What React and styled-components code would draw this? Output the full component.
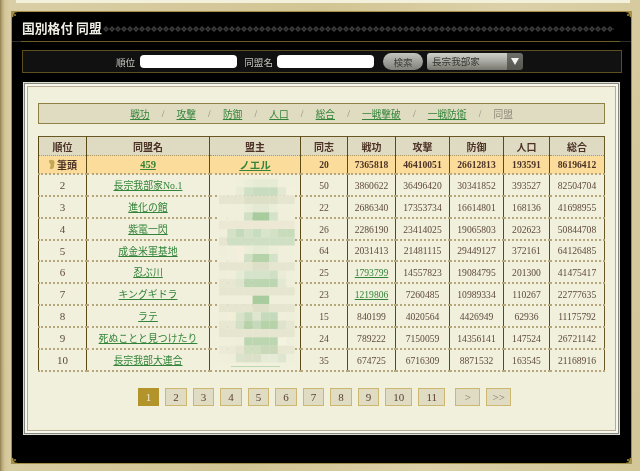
import React from "react";
import styled, { createGlobalStyle } from "styled-components";

const Global = createGlobalStyle`
  html, body { margin: 0; padding: 0; background: #d8cca1; }
  body { font-family: "Liberation Serif", "Noto Sans CJK JP", serif; }
`;

const Page = styled.div`
  width: 640px;
  height: 471px;
  box-sizing: border-box;
  overflow: hidden;
  display: flex;
  flex-direction: column;
  filter: blur(0.25px);
  background:
    linear-gradient(to right, #8f7f50 0, #b9a878 2px, #d3c698 5px, rgba(216,204,161,0) 10px),
    linear-gradient(100deg, #d9cea6, #d2c594 45%, #dbd0a8 70%, #d3c798);
`;

const TopStrip = styled.div`
  height: 3px;
  margin: 0 10px 8px 16px;
  flex: none;
  background: #f3f0dc;
`;

const Panel = styled.section`
  position: relative;
  flex: 1;
  margin: 0 8px 7px 11px;
  border: 1px solid #a58f45;
  background: #000;
  display: flex;
  flex-direction: column;
`;

const Corner = styled.svg`
  position: absolute;
  width: 7px;
  height: 7px;
  ${(p) => (p.$v === "top" ? "top: -1px;" : "bottom: -1px;")}
  ${(p) => (p.$h === "left" ? "left: -1px;" : "right: -1px;")}
  transform: scale(${(p) => (p.$h === "left" ? 1 : -1)}, ${(p) => (p.$v === "top" ? 1 : -1)});
`;

const TitleRow = styled.header`
  flex: none;
  border-bottom: 1px solid #2e2e2e;
`;

const TitleInner = styled.div`
  height: 30px;
  margin: 0 11px -1px 9px;
  padding: 2px 6px 0 1px;
  box-sizing: border-box;
  display: flex;
  align-items: center;
  gap: 1px;
  border-bottom: 1px solid #6d5c25;
`;

const Title = styled.h1`
  margin: 0;
  color: #efefe6;
  font: 700 12.8px "Noto Sans CJK JP", sans-serif;
  white-space: pre;
  flex: none;
`;

const Diamonds = styled.svg`
  flex: 1;
  height: 8px;
  min-width: 0;
  margin-top: 3px;
`;

const SearchBar = styled.form`
  flex: none;
  height: 23px;
  box-sizing: border-box;
  margin: 8px 9px 0 10px;
  padding-right: 5px;
  background: #111;
  border: 1px solid #5d4e20;
  display: flex;
  align-items: center;
  justify-content: center;
`;

const FieldLabel = styled.label`
  color: #c4c4bc;
  font: 400 9.6px "Noto Sans CJK JP", sans-serif;
  margin-right: ${(p) => p.$gap}px;
`;

const TextField = styled.input`
  width: 97px;
  height: 13px;
  box-sizing: border-box;
  padding: 0;
  border: 0;
  border-radius: 4px;
  background: #fff;
  margin-right: ${(p) => p.$gap}px;
`;

const SearchButton = styled.button`
  width: 40px;
  height: 17px;
  padding: 0;
  margin: 0 4px 0 1px;
  border: 0;
  border-radius: 9px;
  background: linear-gradient(#c4c4be, #a2a29c 50%, #81817c);
  color: #3c3c38;
  font: 400 9.6px "Noto Sans CJK JP", sans-serif;
`;

const SelectBox = styled.div`
  width: 96px;
  height: 17px;
  border-radius: 3px;
  overflow: hidden;
  display: flex;
  font: 400 9.6px "Noto Sans CJK JP", sans-serif;
  color: #34342f;
`;

const SelectValue = styled.span`
  flex: 1;
  padding-left: 5px;
  line-height: 16px;
  background: linear-gradient(#d0d0ca, #a8a8a2 50%, #77776f);
`;

const SelectArrow = styled.span`
  width: 16px;
  display: flex;
  align-items: center;
  justify-content: center;
  background: linear-gradient(#6f6f6a, #55554f);
`;

const Frame = styled.main`
  width: 597px;
  height: 353px;
  box-sizing: border-box;
  margin: 9px 0 0 11px;
  padding: 21px 15px 0;
  background: #f1f0dc;
  box-shadow:
    inset 0 0 0 1px #dcdcd0,
    inset 0 0 0 2px #85867e,
    inset 0 0 0 4px #f7f7ee,
    inset 0 0 0 5px #b9ab93;
`;

const Nav = styled.nav`
  width: 567px;
  height: 21px;
  box-sizing: border-box;
  background: #e0dcc2;
  border: 1px solid #8f8046;
  display: flex;
  align-items: center;
  justify-content: center;
  font: 400 9.7px "Noto Sans CJK JP", sans-serif;
`;

const NavLink = styled.a`
  color: #33843a;
  text-decoration: underline;
`;

const NavCurrent = styled.span`
  color: #8a8576;
`;

const NavSep = styled.span`
  width: 27px;
  text-align: center;
  color: #8a8576;
  font-family: "Liberation Serif", serif;
`;

const TableWrap = styled.div`
  position: relative;
  margin-top: 12px;
  width: 566px;
`;

const Ranking = styled.table`
  width: 566px;
  table-layout: fixed;
  border-collapse: collapse;
  border: 1px solid #6a5824;
  color: #5e4a3c;
  font-size: 9.6px;
`;

const Head = styled.th`
  height: 18px;
  padding: 0;
  background: #dfdbc3;
  color: #4c3226;
  font: 700 10px "Noto Sans CJK JP", sans-serif;
  border-left: 1px solid #5c4a16;
  border-bottom: 1px dotted #a8975f;
`;

const Row = styled.tr`
  background: ${(p) => (p.$top ? "#fbdc9b" : "transparent")};
  color: ${(p) => (p.$top ? "#4c3226" : "#5e4a3c")};
  font-weight: ${(p) => (p.$top ? 700 : 400)};
  &:nth-child(5) td { height: 19px; }
`;

const Cell = styled.td`
  height: ${(p) => (p.$top ? 17 : 20)}px;
  padding: 0;
  text-align: center;
  border-left: 1px solid #5c4a16;
  border-bottom: 2px dotted #b5a67c;
  white-space: nowrap;
`;

const RankCell = styled(Cell)`
  font: ${(p) => (p.$top ? "700 10px" : "400 11px")} ${(p) => (p.$top ? '"Noto Sans CJK JP", sans-serif' : '"Liberation Serif", serif')};
`;

const NameLink = styled.a`
  color: #33843a;
  text-decoration: underline;
  font: ${(p) => (p.$top ? "700 10.5px" : "400 9.9px")} "Liberation Serif", "Noto Sans CJK JP", sans-serif;
`;

const NumLink = styled.a`
  color: #33843a;
  text-decoration: underline;
`;

const TopMark = styled.span`
  display: inline-flex;
  align-items: center;
  gap: 1px;
`;

const Mosaic = styled.svg`
  position: absolute;
  left: 181px;
  top: 43px;
  width: 76px;
  height: 192px;
`;

const Pager = styled.div`
  margin-top: 16px;
  padding-left: 6px;
  display: flex;
  justify-content: center;
  gap: 6px;
`;

const PageBox = styled.a`
  width: ${(p) => p.$w || 21.5}px;
  height: 18px;
  box-sizing: border-box;
  margin-left: ${(p) => p.$gap || 0}px;
  display: flex;
  align-items: center;
  justify-content: center;
  border: 1px solid ${(p) => (p.$on ? "#b3942a" : "#cdb670")};
  background: ${(p) => (p.$on ? "#b3942a" : "#e0dcc4")};
  color: ${(p) => (p.$on ? "#f0ebcc" : p.$dim ? "#7d7364" : "#5a4032")};
  font: 400 11px "Liberation Serif", serif;
`;

const L = "#f1f0dc", B = "#e6e5cf", D = "#dddfc6", P = "#ece8d4";
const mosaicRows = [
  [L, L, "#eef0dc", "#eaeed8", "#e6ecd4", "#e6ecd4", "#e6ecd4", L, L],
  [L, L, "#e9ebd5", "#cfe0c4", "#c8dcc0", "#c8dcc0", "#c8dcc0", "#e3e8d2", "#f3f1de"],
  [B, B, B, D, D, D, D, B, B],
  ["#f0efdc", "#f0efdc", "#f0efdc", "#eaeed8", "#e3e9d2", "#e3e9d2", "#eaeed8", "#f0efdc", "#f0efdc"],
  ["#f0efdc", "#f0efdc", "#f0efdc", "#d0e0c4", "#a9cc9f", "#a9cc9f", "#d3e2c8", "#f0efdc", "#f0efdc"],
  [P, P, P, P, P, P, P, P, P],
  ["#f0efdc", "#d3e2c6", "#c4dabb", "#d3e2c6", "#c8dcc0", "#d8e4cc", "#d3e2c6", "#c8dcbc", "#c8dcbc"],
  [B, "#cfdfc3", "#cfdfc3", "#cfdfc3", "#cfdfc3", "#cfdfc3", "#cfdfc3", "#cfdfc3", "#cfdfc3"],
  ["#eeeeda", "#f0efdc", "#f3efdc", "#eceed8", "#e6ecd4", "#e6ecd4", "#eceed8", "#f0efdc", "#f0efdc"],
  ["#f0efdc", "#f0efdc", "#f3efdc", "#d0e0c4", "#b5d2a9", "#b5d2a9", "#d3e2c8", "#f0efdc", "#f0efdc"],
  [B, B, B, B, D, D, B, B, B],
  ["#eeeeda", "#f0efdc", "#e6ebd6", "#d5e3ca", "#d5e3ca", "#d5e3ca", "#cfe0c4", "#eaecd8", "#f0efdc"],
  ["#e8e8d2", "#e8e8d2", "#dfe5cf", "#bdd6b2", "#bdd6b2", "#bdd6b2", "#bdd6b2", "#e3e8d2", "#eeeeda"],
  [B, B, B, B, B, B, B, B, B],
  ["#f0efdc", "#f0efdc", "#f0efdc", "#f0efdc", "#a9cc9f", "#a9cc9f", "#f0efdc", "#f0efdc", "#f0efdc"],
  [B, B, B, B, D, D, B, B, B],
  ["#eeeeda", "#f2efd8", "#d8e3ca", "#c4dabb", "#dfe6d0", "#c4dabb", "#c4dabb", "#f0efdc", "#eeeeda"],
  ["#e8e8d2", "#e8e8d2", "#d3dfc4", "#b5d2a9", "#c4dabb", "#b5d2a9", "#b5d2a9", "#dfe3cd", "#e8e8d2"],
  [B, B, B, B, B, B, B, B, B],
  ["#f0efdc", "#f0efdc", "#eeeeda", "#bdd6b2", "#bdd6b2", "#bdd6b2", "#bdd6b2", "#f4f3e0", "#f0efdc"],
  ["#eaead6", "#eaead6", "#e6e5cf", "#d0dfc0", "#d0dfc0", "#c8d8b8", "#c8d8b8", "#e8e8d2", "#e8e8d2"],
  ["#f0efdc", "#eeeeda", "#dbe3cc", "#dbe1c8", "#dbe1c8", "#e6ebd8", "#e6ebd8", "#dfe6d0", "#f0efdc"],
];

const columns = ["同盟名", "盟主", "同志", "戦功", "攻撃", "防御", "人口", "総合"];
const rows = [
  ["459", "ノエル", 20, "7365818", "46410051", "26612813", "193591", "86196412"],
  ["長宗我部家No.1", "", 50, "3860622", "36496420", "30341852", "393527", "82504704"],
  ["進化の館", "", 22, "2686340", "17353734", "16614801", "168136", "41698955"],
  ["紫電一閃", "", 26, "2286190", "23414025", "19065803", "202623", "50844708"],
  ["成金米軍基地", "", 64, "2031413", "21481115", "29449127", "372161", "64126485"],
  ["忍ぶ川", "", 25, "1793799", "14557823", "19084795", "201300", "41475417"],
  ["キングギドラ", "", 23, "1219806", "7260485", "10989334", "110267", "22777635"],
  ["ラテ", "", 15, "840199", "4020564", "4426949", "62936", "11175792"],
  ["死ぬことと見つけたり", "", 24, "789222", "7150059", "14356141", "147524", "26721142"],
  ["長宗我部大連合", "", 35, "674725", "6716309", "8871532", "163545", "21168916"],
];
const widths = [48, 123, 91, 47, 48, 54, 54, 46, 55];
const navItems = ["戦功", "攻撃", "防御", "人口", "総合", "一戦撃破", "一戦防衛"];
const pages = ["1", "2", "3", "4", "5", "6", "7", "8", "9"];

const CornerMark = ({ v, h }) => (
  <Corner $v={v} $h={h} viewBox="0 0 7 7">
    <path d="M0 0H7L5.5 1.5H3.5V2.5L2.5 3.5V5.5L0 7Z" fill="#a58f45" />
    <circle cx="4" cy="4" r="1" fill="#a58f45" />
  </Corner>
);

export default function App() {
  return (
    <Page>
      <Global />
      <TopStrip />
      <Panel>
        <CornerMark v="top" h="left" />
        <CornerMark v="top" h="right" />
        <CornerMark v="bottom" h="left" />
        <CornerMark v="bottom" h="right" />
        <TitleRow>
          <TitleInner>
            <Title>国別格付 同盟</Title>
            <Diamonds>
              <defs>
                <pattern id="dia" width="6" height="8" patternUnits="userSpaceOnUse">
                  <path d="M3 1L6 4L3 7L0 4Z" fill="#3e3e3e" />
                  <path d="M3 3L4 4L3 5L2 4Z" fill="#141414" />
                </pattern>
              </defs>
              <rect width="100%" height="8" fill="url(#dia)" />
            </Diamonds>
          </TitleInner>
        </TitleRow>
        <SearchBar>
          <FieldLabel $gap={5}>順位</FieldLabel>
          <TextField type="text" $gap={7} />
          <FieldLabel $gap={4}>同盟名</FieldLabel>
          <TextField type="text" $gap={8} />
          <SearchButton type="button">検索</SearchButton>
          <SelectBox>
            <SelectValue>長宗我部家</SelectValue>
            <SelectArrow>
              <svg width="8" height="7" viewBox="0 0 8 7">
                <path d="M0 0H8L4 7Z" fill="#f4f4f0" />
              </svg>
            </SelectArrow>
          </SelectBox>
        </SearchBar>
        <Frame>
          <Nav>
            {navItems.map((n) => (
              <React.Fragment key={n}>
                <NavLink>{n}</NavLink>
                <NavSep>/</NavSep>
              </React.Fragment>
            ))}
            <NavCurrent>同盟</NavCurrent>
          </Nav>
          <TableWrap>
            <Ranking>
              <colgroup>
                {widths.map((w, i) => (
                  <col key={i} style={{ width: w }} />
                ))}
              </colgroup>
              <thead>
                <tr>
                  <Head>順位</Head>
                  {columns.map((c) => (
                    <Head key={c}>{c}</Head>
                  ))}
                </tr>
              </thead>
              <tbody>
                {rows.map((r, i) => {
                  const top = i === 0;
                  return (
                    <Row key={r[0]} $top={top}>
                      <RankCell $top={top}>
                        {top ? (
                          <TopMark>
                            <svg width="8" height="11" viewBox="0 0 8 11">
                              <path d="M1 1.5C3 0 6 .5 6.5 3C7 4.5 5.5 5 6 6.5C6.5 8.5 5 10.5 2.5 10C1 9.5 3 7.5 2.5 5.5C2 4 .5 3 1 1.5Z" fill="#c4a757" />
                            </svg>
                            筆頭
                          </TopMark>
                        ) : (
                          i + 1
                        )}
                      </RankCell>
                      <Cell $top={top}>
                        <NameLink $top={top}>{r[0]}</NameLink>
                      </Cell>
                      <Cell $top={top}>{r[1] && <NameLink $top={top}>{r[1]}</NameLink>}</Cell>
                      <Cell $top={top}>{r[2]}</Cell>
                      <Cell $top={top}>
                        {i === 5 || i === 6 ? <NumLink>{r[3]}</NumLink> : r[3]}
                      </Cell>
                      <Cell $top={top}>{r[4]}</Cell>
                      <Cell $top={top}>{r[5]}</Cell>
                      <Cell $top={top}>{r[6]}</Cell>
                      <Cell $top={top}>{r[7]}</Cell>
                    </Row>
                  );
                })}
              </tbody>
            </Ranking>
            <Mosaic viewBox="0 0 76 192" aria-hidden="true">
              {mosaicRows.map((row, y) =>
                row.map((c, x) => (
                  <rect key={`${x}-${y}`} x={x * 8.4} y={y * 8.33} width="8.5" height="8.43" fill={c} />
                ))
              )}
              <rect x="12" y="187" width="49" height="1" fill="#bcd8b0" />
            </Mosaic>
          </TableWrap>
          <Pager>
            {pages.map((p, i) => (
              <PageBox key={p} $on={i === 0}>
                {p}
              </PageBox>
            ))}
            <PageBox $w={27}>10</PageBox>
            <PageBox $w={27}>11</PageBox>
            <PageBox $gap={4} $w={25} $dim>
              &gt;
            </PageBox>
            <PageBox $w={25} $dim>
              &gt;&gt;
            </PageBox>
          </Pager>
        </Frame>
      </Panel>
    </Page>
  );
}
